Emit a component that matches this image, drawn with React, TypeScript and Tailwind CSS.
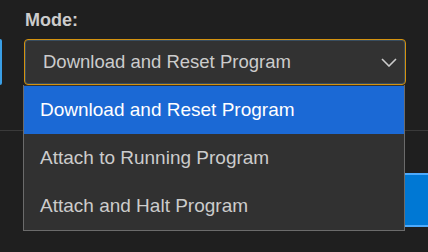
import React from 'react';

const OPTIONS = [
  'Download and Reset Program',
  'Attach to Running Program',
  'Attach and Halt Program',
];

const chevron = (
  <svg
    xmlns="http://www.w3.org/2000/svg"
    width="16"
    height="9"
    viewBox="0 0 16 9"
    fill="none"
    stroke="#cccccc"
    strokeWidth="1.6"
  >
    <path d="M1 1l7 7 7-7" />
  </svg>
);

export default function App() {
  const selected = 0;

  const optionElements = OPTIONS.map((label, index) => (
    <div
      key={label}
      className={`flex h-[48px] items-center pl-[16px] text-[19px] ${
        index === selected ? 'bg-[#1b69d5] text-white' : 'text-[#cccccc]'
      }`}
    >
      {label}
    </div>
  ));

  return (
    <div className="relative h-[252px] w-[428px] overflow-hidden bg-[#1f1f1f] font-['Liberation_Sans',Arial,sans-serif]">
      <div className="pl-[25px] pt-[9px] text-[18px] font-bold leading-[22px] text-[#cccccc]">
        Mode:
      </div>

      {/* select row, the strip on the left is a control cut off by the window */}
      <div className="mt-[8px] flex h-[46px]">
        <div className="w-[2px] rounded-r-[3px] bg-[#3a9fe6]" />
        <div className="ml-[22px] flex w-[382px] items-center justify-between rounded-[4px] border border-[#d4920f] bg-[#323232] pl-[18px] pr-[8px] shadow-[inset_0_0_0_1px_rgba(70,130,180,0.35)]">
          <span className="text-[18.5px] text-[#cccccc]">{OPTIONS[selected]}</span>
          {chevron}
        </div>
      </div>

      <div className="mt-[45px] h-px bg-[#3a3a3a]" />

      <div className="mt-[42px] flex justify-end">
        <div className="h-[54px] w-[23px] border-y-2 border-[#4daafc] bg-[#0078d4]" />
      </div>

      {/* open dropdown list */}
      <div className="absolute left-[23px] top-[85px] w-[382px] border border-t-0 border-[#6b6b6b] bg-[#313131]">
        <div className="pt-px">{optionElements}</div>
      </div>
    </div>
  );
}
